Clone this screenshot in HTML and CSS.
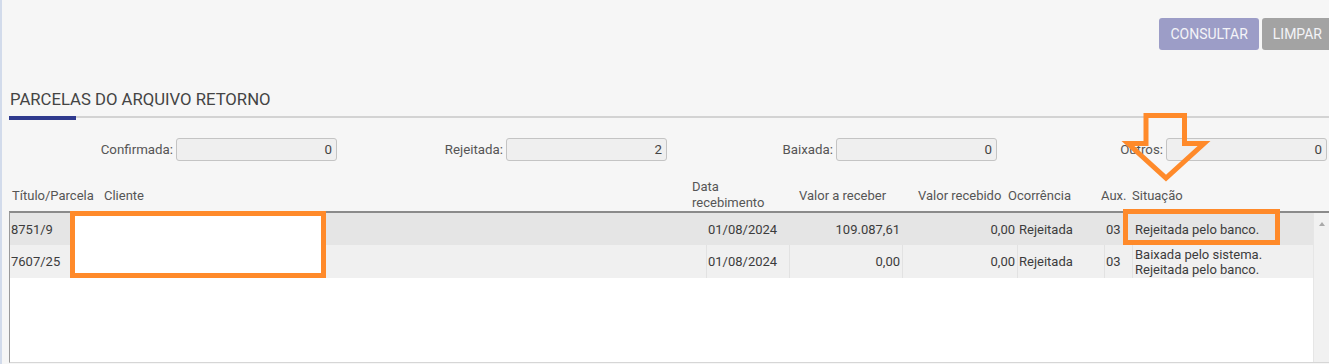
FILE: index.html
```html
<!DOCTYPE html>
<html>

<head>
  <title>Parcelas do arquivo retorno</title>
  <link rel="stylesheet" href="styles.css">
</head>

<body>
  <div class="page">
    <div class="toolbar">
      <button class="btn btn-primary">CONSULTAR</button>
      <button class="btn btn-clear">LIMPAR</button>
    </div>

    <h2 class="section-title">PARCELAS DO ARQUIVO RETORNO</h2>
    <div class="tab-line">
      <div class="tab-active"></div>
    </div>

    <div class="counters">
      <label class="counter"><span>Confirmada:</span><input class="counter-input" value="0" readonly></label>
      <label class="counter"><span>Rejeitada:</span><input class="counter-input" value="2" readonly></label>
      <label class="counter"><span>Baixada:</span><input class="counter-input" value="0" readonly></label>
      <label class="counter"><span>Outros:</span><input class="counter-input" value="0" readonly></label>
    </div>

    <div class="grid-head">
      <div class="head-cell head-titulo">Título/Parcela</div>
      <div class="head-cell">Cliente</div>
      <div class="head-cell head-two">Data<br>recebimento</div>
      <div class="head-cell">Valor a receber</div>
      <div class="head-cell">Valor recebido</div>
      <div class="head-cell">Ocorrência</div>
      <div class="head-cell">Aux.</div>
      <div class="head-cell">Situação</div>
    </div>

    <div class="grid-body">
      <div class="rows">
        <div class="row row-selected">
          <div class="cell cell-titulo">8751/9</div>
          <div class="cell"></div>
          <div class="cell cell-date">01/08/2024</div>
          <div class="cell cell-num">109.087,61</div>
          <div class="cell cell-num">0,00</div>
          <div class="cell cell-text">Rejeitada</div>
          <div class="cell cell-aux">03</div>
          <div class="cell cell-status">Rejeitada pelo banco.</div>
        </div>
        <div class="row row-tall">
          <div class="cell cell-titulo">7607/25</div>
          <div class="cell"></div>
          <div class="cell cell-date">01/08/2024</div>
          <div class="cell cell-num">0,00</div>
          <div class="cell cell-num">0,00</div>
          <div class="cell cell-text">Rejeitada</div>
          <div class="cell cell-aux">03</div>
          <div class="cell cell-status">Baixada pelo sistema.<br>Rejeitada pelo banco.</div>
        </div>
      </div>
      <div class="scrollbar">
        <span class="scroll-up"></span>
      </div>
    </div>

    <!-- annotations drawn over the screenshot -->
    <div class="mark mark-client"></div>
    <div class="mark mark-status"></div>
    <svg class="mark-arrow" width="95" height="80" viewBox="0 0 95 80">
      <polygon points="26,7.5 64.5,7.5 64.5,35.5 84,35.5 46,70 8,35.5 26,35.5" fill="none" stroke="#ff8a2a" stroke-width="5" stroke-linejoin="miter" />
    </svg>
  </div>
</body>

</html>
```

FILE: styles.css
```css
body {
  margin: 0;
  background-color: #f6f6f6;
  font-family: Roboto, "Liberation Sans", sans-serif;
  font-size: 13px;
  color: #555;
  overflow: hidden;
}

.page {
  position: relative;
  width: 1329px;
  height: 364px;
  box-sizing: border-box;
  border-left: 2px solid #d2dbeb;
  padding-left: 7px;
  overflow: hidden;
}

/* buttons on the top right */
.toolbar {
  display: flex;
  justify-content: flex-end;
  gap: 3px;
  padding-top: 18px;
  margin-right: -4px;
}

.btn {
  height: 32px;
  padding: 0 11px;
  border: none;
  border-radius: 3px;
  font-family: Roboto, "Liberation Sans", sans-serif;
  font-size: 14px;
  color: #f4f4f8;
}

.btn-primary {
  background-color: #9c9dc7;
}

.btn-clear {
  background-color: #a3a3a3;
}

.section-title {
  margin: 40px 0 0 1px;
  font-size: 16.7px;
  font-weight: normal;
  line-height: 20px;
  color: #444;
}

.tab-line {
  height: 2px;
  margin-top: 6px;
  background-color: #d3d3d3;
}

.tab-active {
  width: 67px;
  height: 4px;
  background-color: #2f3a8e;
}

/* totals row */
.counters {
  display: grid;
  grid-template-columns: repeat(4, 330px);
  margin-top: 20px;
  margin-left: -2px;
}

.counter {
  display: flex;
  justify-content: flex-end;
  align-items: center;
  gap: 3px;
  font-size: 13.3px;
}

.counter-input {
  width: 161px;
  height: 23px;
  box-sizing: border-box;
  border: 1px solid #c4c4c4;
  border-radius: 3px;
  background-color: #efefef;
  padding: 0 4px;
  text-align: right;
  font-family: Roboto, "Liberation Sans", sans-serif;
  font-size: 13.3px;
  color: #444;
}

/* grid header */
.grid-head {
  display: grid;
  grid-template-columns: 93px 588px 107px 119px 90px 93px 31px 1fr;
  align-items: center;
  height: 32px;
  margin-top: 18px;
  white-space: nowrap;
}

.head-cell {
  padding-left: 2px;
}

.head-titulo {
  padding-left: 3px;
}

.head-two {
  line-height: 16px;
}

/* grid body */
.grid-body {
  display: flex;
  height: 152px;
  box-sizing: border-box;
  border-left: 1px solid #9a9a9a;
  border-top: 2px solid #8a8a8a;
  border-bottom: 1px solid #d6d6d6;
  background-color: #fff;
}

.rows {
  flex: 1;
}

.row {
  display: grid;
  grid-template-columns: 92px 604px 83px 113px 115px 87px 28px 1fr;
  height: 32px;
  background-color: #f0f0f0;
  color: #3c3c3c;
  white-space: nowrap;
}

.row-selected {
  background-color: #e5e5e5;
}

.row-tall {
  height: 33px;
}

.cell {
  display: flex;
  align-items: center;
  border-left: 1px solid #e2e2e2;
}

.row-selected .cell {
  border-left-color: transparent;
}

.cell-titulo {
  padding-left: 1px;
  border-left: none;
}

.cell-date {
  padding-left: 1px;
}

.cell-num {
  justify-content: flex-end;
  padding-right: 2px;
}

.cell-text {
  padding-left: 1px;
}

.cell-aux {
  padding-left: 1px;
}

.cell-status {
  padding-left: 2px;
  line-height: 15px;
}

.scrollbar {
  width: 15px;
  background-color: #f1f1f1;
  border-left: 1px solid #e6e6e6;
  display: flex;
  justify-content: center;
}

.scroll-up {
  width: 0;
  height: 0;
  margin-top: 9px;
  border-left: 3px solid transparent;
  border-right: 3px solid transparent;
  border-bottom: 4px solid #a9a9a9;
}

/* orange highlight marks */
.mark {
  position: absolute;
  box-sizing: border-box;
  border: 5px solid #ff8a2a;
}

.mark-client {
  left: 68px;
  top: 211px;
  width: 256px;
  height: 67px;
  background-color: #fff;
}

.mark-status {
  left: 1121px;
  top: 209px;
  width: 157px;
  height: 36px;
}

.mark-arrow {
  position: absolute;
  left: 1118px;
  top: 108px;
}
```
